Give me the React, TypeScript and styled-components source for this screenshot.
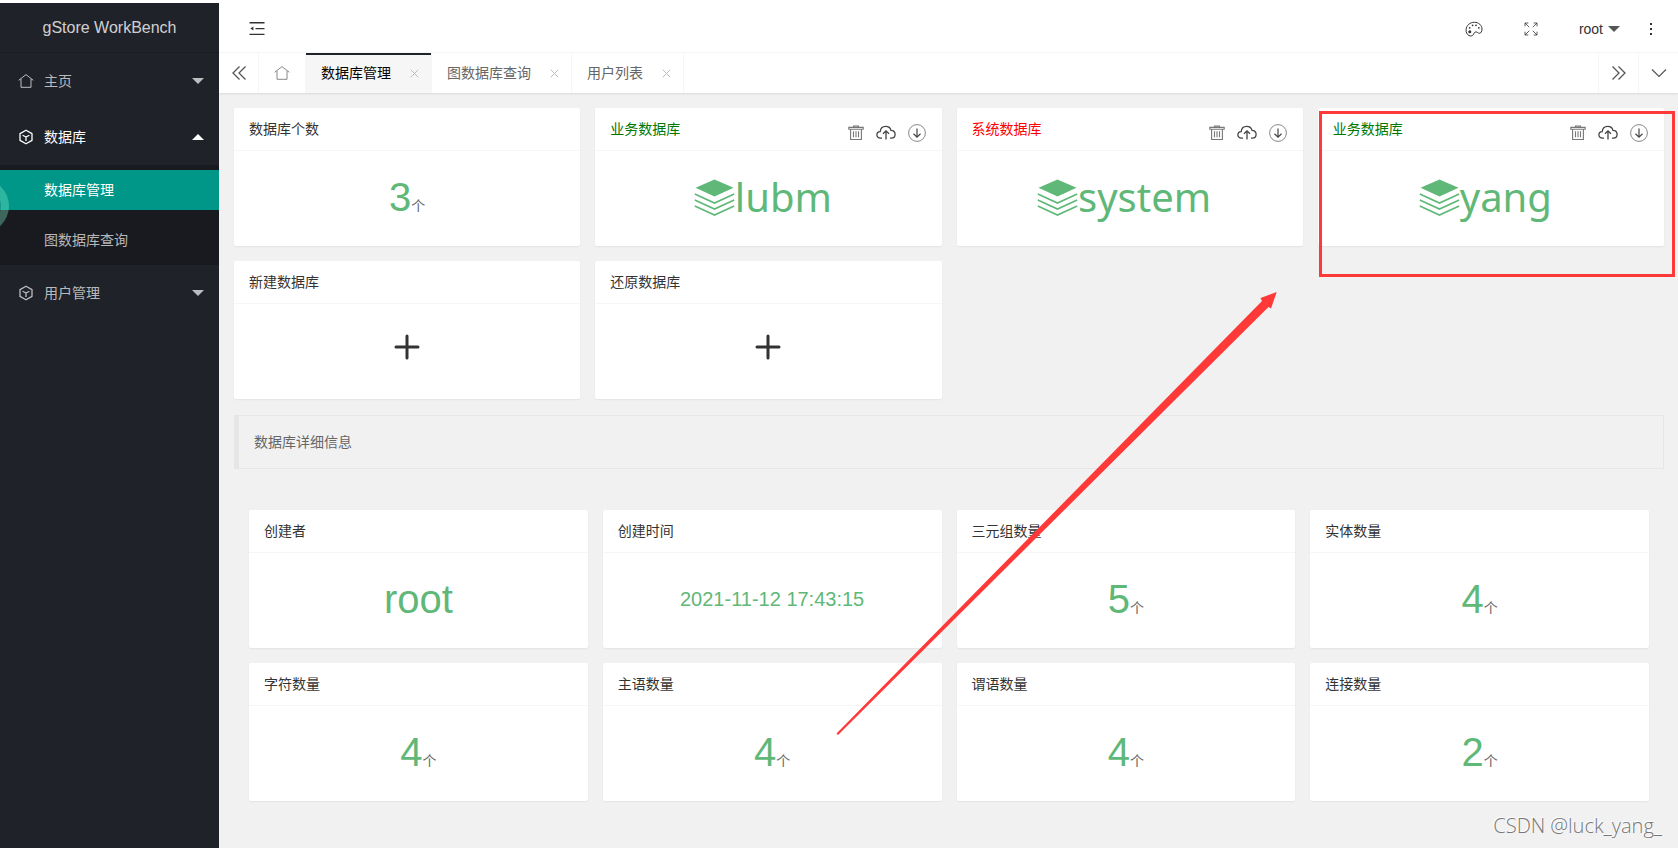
import React, { ReactNode } from 'react';
import styled, { createGlobalStyle } from 'styled-components';

const GlobalStyle = createGlobalStyle`
  * { box-sizing: border-box; }
  html, body { margin: 0; padding: 0; }
  body {
    background: #f1f1f1;
    color: #333;
    font: 14px/24px "Liberation Sans", "Noto Sans CJK SC", sans-serif;
  }
  button { font: inherit; color: inherit; background: none; border: 0; padding: 0; cursor: pointer; }
  a { color: inherit; text-decoration: none; }
  h1, h2, h3, p { margin: 0; padding: 0; font-weight: 400; }
  svg { display: block; flex: none; }
`;

const green = '#5fb878';

const Page = styled.div`
  position: relative;
  display: flex;
  min-height: 100vh;
  border-top: 3px solid #fff;
  overflow: hidden;
  &::before {
    content: "";
    position: absolute;
    top: -1px;
    left: 0;
    right: 0;
    height: 1px;
    background: #d9d9d9;
  }
`;

const Sidebar = styled.aside`
  position: relative;
  width: 219px;
  flex: none;
  background: #20222a;
  color: rgba(255, 255, 255, 0.7);
`;

const Logo = styled.h1`
  height: 50px;
  line-height: 50px;
  font-size: 16px;
  text-align: center;
  color: rgba(255, 255, 255, 0.8);
  border-bottom: 1px solid #1b1d23;
`;

const NavItem = styled.button<{ $active?: boolean }>`
  display: flex;
  align-items: center;
  gap: 10px;
  width: 100%;
  height: 56px;
  padding: 0 15px 0 18px;
  color: ${(p) => (p.$active ? '#fff' : 'rgba(255,255,255,0.7)')};
  span { flex: 1; text-align: left; }
`;

const Caret = styled.i<{ $up?: boolean; $color?: string }>`
  width: 0;
  height: 0;
  border: 6px solid transparent;
  border-top-color: ${(p) => (p.$up ? 'transparent' : p.$color || 'currentColor')};
  border-bottom-color: ${(p) => (p.$up ? p.$color || 'currentColor' : 'transparent')};
  margin-top: ${(p) => (p.$up ? '-6px' : '6px')};
`;

const SubMenu = styled.div`
  display: flex;
  flex-direction: column;
  gap: 10px;
  padding: 5px 0;
  background: #191a20;
`;

const SubLink = styled.a<{ $active?: boolean }>`
  height: 40px;
  line-height: 40px;
  padding-left: 44px;
  color: ${(p) => (p.$active ? '#fff' : 'rgba(255,255,255,0.7)')};
  background: ${(p) => (p.$active ? '#009688' : 'transparent')};
`;

const FloatingBall = styled.span`
  position: absolute;
  left: -45px;
  top: 176px;
  width: 54px;
  height: 54px;
  border-radius: 50%;
  border: 8px solid rgba(124, 237, 200, 0.36);
  background: rgba(70, 150, 150, 0.36) padding-box;
`;

const Main = styled.div`
  flex: 1;
  min-width: 0;
`;

const Header = styled.header`
  display: flex;
  align-items: center;
  justify-content: space-between;
  height: 50px;
  padding: 2px 25px 0 30px;
  background: #fff;
  border-bottom: 1px solid #f6f6f6;
`;

const HeaderTools = styled.div`
  display: flex;
  align-items: center;
`;

const ToolButton = styled.button<{ $gap?: number }>`
  display: flex;
  align-items: center;
  gap: 5px;
  margin-right: ${(p) => p.$gap || 0}px;
`;

const CloseButton = styled.button`
  color: #bbb;
`;

const TabBar = styled.nav`
  position: relative;
  display: flex;
  height: 40px;
  background: #fff;
  box-shadow: 0 1px 2px rgba(0, 0, 0, 0.1);
`;

const TabControl = styled.button<{ $wide?: boolean; $end?: boolean }>`
  display: flex;
  align-items: center;
  justify-content: center;
  width: ${(p) => (p.$wide ? 47 : 40)}px;
  color: ${(p) => (p.$wide ? '#888' : '#555')};
  border-style: solid;
  border-color: #f6f6f6;
  border-width: ${(p) => (p.$end ? '0 0 0 1px' : '0 1px 0 0')};
`;

const Spacer = styled.div`
  flex: 1;
`;

const Tab = styled.div<{ $active?: boolean }>`
  display: flex;
  align-items: center;
  gap: 19px;
  padding: 0 12px 0 15px;
  border-right: 1px solid #f6f6f6;
  color: ${(p) => (p.$active ? '#000' : '#666')};
  background: ${(p) => (p.$active ? '#f6f6f6' : '#fff')};
  box-shadow: ${(p) => (p.$active ? 'inset 0 2px 0 #20222a' : 'none')};
`;

const Content = styled.main`
  padding: 15px 14px 45px 15px;
`;

const CardGrid = styled.div<{ $inset?: boolean }>`
  display: grid;
  grid-template-columns: repeat(4, minmax(0, 1fr));
  gap: 15px;
  padding: ${(p) => (p.$inset ? '0 15px' : '0')};
`;

const Card = styled.section`
  background: #fff;
  border-radius: 2px;
  box-shadow: 0 1px 2px rgba(0, 0, 0, 0.06);
`;

const CardHead = styled.header<{ $color?: string }>`
  display: flex;
  justify-content: space-between;
  height: 43px;
  padding: 0 16px 0 15px;
  line-height: 42px;
  color: ${(p) => p.$color || '#333'};
  border-bottom: 1px solid #f6f6f6;
  h3 { font-size: 14px; }
`;

const CardActions = styled.div`
  display: flex;
  align-items: center;
  gap: 12px;
  padding-top: 8px;
  color: #444;
`;

const CardBody = styled.div`
  display: flex;
  align-items: center;
  justify-content: center;
  height: 95px;
  padding-bottom: 3px;
  color: #666;
`;

const AddButton = styled.button`
  padding-bottom: 6px;
`;

const Figure = styled.p<{ $small?: boolean }>`
  display: flex;
  align-items: baseline;
  line-height: 14px;
  strong {
    font-weight: 400;
    font-size: ${(p) => (p.$small ? 20 : 40)}px;
    line-height: 40px;
    color: ${green};
  }
`;

const DbName = styled.p`
  display: flex;
  align-items: center;
  padding-right: 11px;
  color: ${green};
  font: 40px/48px "Noto Sans", "Open Sans", sans-serif;
`;

const Quote = styled.h2`
  margin: 16px 0 41px;
  padding: 15px;
  border: 1px solid #e6e6e6;
  border-left-width: 5px;
  font-size: 14px;
  line-height: 22px;
  color: #666;
`;

const Highlight = styled.div`
  position: absolute;
  z-index: 2;
  top: 108px;
  right: 3px;
  width: 356px;
  height: 166px;
  border: 3px solid #ff3838;
  pointer-events: none;
`;

const Arrow = styled.svg`
  position: absolute;
  z-index: 2;
  top: 288px;
  right: 400px;
  pointer-events: none;
`;

const Watermark = styled.div`
  position: absolute;
  right: 16px;
  bottom: 9px;
  font: 20px/26px "Open Sans", "Noto Sans", sans-serif;
  font-weight: 300;
  color: #777;
  text-shadow: -1px -1px 0 #fff;
`;

type IconProps = { children: ReactNode; w?: number; h?: number; box?: string; sw?: number };
const Icon = ({ children, w = 16, h = 16, box = '0 0 16 16', sw = 1 }: IconProps) => (
  <svg width={w} height={h} viewBox={box} fill="none" stroke="currentColor" strokeWidth={sw} aria-hidden="true">
    {children}
  </svg>
);

const HomeIcon = () => (
  <Icon>
    <path d="M.7 7.3 8 1.6l7.3 5.7M3 6v8.3h10V6" strokeLinejoin="round" />
  </Icon>
);

const CubeIcon = () => (
  <Icon sw={1.3}>
    <path d="M8 1.2 14 4.6v6.8L8 14.8 2 11.4V4.6zM4.600 6.200 8 8l3.400-1.800M8 8v4" strokeLinejoin="round" />
  </Icon>
);

const FoldIcon = () => (
  <Icon>
    <path d="M.5 1.7h15M6.5 7.6h9M.5 13.4h15" strokeWidth="1.4" />
    <path d="M4.4 5.6v4L1.4 7.6z" fill="currentColor" stroke="none" />
  </Icon>
);

const PaletteIcon = () => (
  <Icon w={18} h={16} box="0 0 18 16">
    <path d="M4 14.6C1.8 13.3.8 11 1.1 8.4 1.6 4.2 5 1.3 9.3 1.3c4.4 0 7.7 3 7.7 6.7 0 2.3-1 4.3-2.6 4.3-1.4 0-2-1.5-3.5-1.4-1.8.1-1.8 1.7-2.7 2.9-1 1.3-2.7 1.5-4.2.8z" />
    <g fill="currentColor" stroke="none">
      <circle cx="4.8" cy="10.7" r="1.5" />
      <circle cx="4.7" cy="6.8" r=".9" />
      <circle cx="7.6" cy="4.3" r=".9" />
      <circle cx="11" cy="4.3" r=".9" />
      <circle cx="13.8" cy="6.8" r=".9" />
    </g>
  </Icon>
);

const ExpandIcon = () => (
  <Icon w={14} h={14} box="0 0 14 14" sw={0.8}>
    <path d="M1 4.3V1h3.3M1 1l4.2 4.2M9.7 1H13v3.3M13 1 8.8 5.2M1 9.7V13h3.3M1 13l4.2-4.2M9.7 13H13V9.7M13 13 8.8 8.8" />
  </Icon>
);

const MoreIcon = () => (
  <Icon w={4} h={14} box="0 0 4 14">
    <path d="M1 1h2v2H1zM1 6h2v2H1zM1 11h2v2H1z" fill="currentColor" stroke="none" />
  </Icon>
);

const DoubleChevron = ({ right }: { right?: boolean }) => (
  <Icon sw={1.3}>
    <path d={right ? 'M1.5 1.5 8 8l-6.5 6.5M7.5 1.5 14 8l-6.5 6.5' : 'M8.5 1.5 2 8l6.5 6.5M14.5 1.5 8 8l6.5 6.5'} />
  </Icon>
);

const ChevronDown = () => (
  <Icon sw={1.2}>
    <path d="m1 4.5 7 7 7-7" />
  </Icon>
);

const CloseIcon = () => (
  <Icon w={9} h={9} box="0 0 9 9">
    <path d="m.7.7 7.6 7.6M8.3.7.7 8.3" />
  </Icon>
);

const TrashIcon = () => (
  <Icon sw={1.1}>
    <g stroke="#777">
      <path d="M5.5 2.2V1h5v1.2M.8 2.4h14.4v1.8H.8zM2.6 4.4v10.1h10.8V4.4" />
      <path d="M5.5 6.3v5.9M8 6.3v5.9M10.5 6.3v5.9" />
    </g>
  </Icon>
);

const CloudIcon = () => (
  <Icon w={20} h={16} box="0 0 20 16" sw={1.3}>
    <path d="M6 13.2H4.5C2.5 13.2.9 11.8.9 10c0-1.9 1.5-3.2 3.3-3.3C4.4 3.5 6.7 1.3 9.7 1.3c2.7 0 4.7 1.5 5.3 4 2.4.1 4.1 1.8 4.1 4 0 2.3-1.6 3.9-3.9 3.9H14" />
    <path d="M10 14.5V6M7 8.8l3-3 3 3" />
  </Icon>
);

const DownloadIcon = () => (
  <Icon w={18} h={18} box="0 0 18 18">
    <circle cx="9" cy="9" r="8.4" stroke="#888" />
    <path d="M9 4.5v8.5M5.5 9.7 9 13.1l3.5-3.4" strokeWidth="1.2" />
  </Icon>
);

const LayersIcon = () => (
  <Icon w={41} h={37} box="0 0 41 37" sw={1.6}>
    <path d="M20.5.5 39.5 8.8 20.5 17.5 1.5 8.8z" fill="currentColor" stroke="none" />
    <path d="M.8 15 20.5 24 40.2 15M.8 21 20.5 30 40.2 21M.8 27 20.5 36 40.2 27" />
  </Icon>
);

const PlusIcon = () => (
  <Icon w={26} h={26} box="0 0 26 26" sw={3}>
    <path d="M13 2v22M2 13h22" stroke="#333" strokeLinecap="round" />
  </Icon>
);

const StatCard = ({ title, value, unit, small }: { title: string; value: string; unit?: string; small?: boolean }) => (
  <Card>
    <CardHead><h3>{title}</h3></CardHead>
    <CardBody>
      <Figure $small={small}><strong>{value}</strong>{unit}</Figure>
    </CardBody>
  </Card>
);

const DatabaseCard = ({ name, system }: { name: string; system?: boolean }) => (
  <Card>
    <CardHead $color={system ? 'red' : '#007800'}>
      <h3>{system ? '系统数据库' : '业务数据库'}</h3>
      <CardActions>
        <button aria-label="删除"><TrashIcon /></button>
        <button aria-label="备份"><CloudIcon /></button>
        <button aria-label="导出"><DownloadIcon /></button>
      </CardActions>
    </CardHead>
    <CardBody>
      <DbName><LayersIcon />{name}</DbName>
    </CardBody>
  </Card>
);

const ActionCard = ({ title }: { title: string }) => (
  <Card>
    <CardHead><h3>{title}</h3></CardHead>
    <CardBody>
      <AddButton aria-label={title}><PlusIcon /></AddButton>
    </CardBody>
  </Card>
);

const details = [
  { title: '创建者', value: 'root' },
  { title: '创建时间', value: '2021-11-12 17:43:15', small: true },
  { title: '三元组数量', value: '5', unit: '个' },
  { title: '实体数量', value: '4', unit: '个' },
  { title: '字符数量', value: '4', unit: '个' },
  { title: '主语数量', value: '4', unit: '个' },
  { title: '谓语数量', value: '4', unit: '个' },
  { title: '连接数量', value: '2', unit: '个' },
];

const tabs = ['数据库管理', '图数据库查询', '用户列表'];

export default function App() {
  return (
    <>
      <GlobalStyle />
      <Page>
        <Sidebar>
          <Logo>gStore WorkBench</Logo>
          <NavItem><HomeIcon /><span>主页</span><Caret /></NavItem>
          <NavItem $active><CubeIcon /><span>数据库</span><Caret $up /></NavItem>
          <SubMenu>
            <SubLink href="#manage" $active>数据库管理</SubLink>
            <SubLink href="#query">图数据库查询</SubLink>
          </SubMenu>
          <NavItem><CubeIcon /><span>用户管理</span><Caret /></NavItem>
          <FloatingBall />
        </Sidebar>
        <Main>
          <Header>
            <ToolButton aria-label="折叠菜单"><FoldIcon /></ToolButton>
            <HeaderTools>
              <ToolButton $gap={41} aria-label="主题"><PaletteIcon /></ToolButton>
              <ToolButton $gap={41} aria-label="全屏"><ExpandIcon /></ToolButton>
              <ToolButton $gap={29}>root<Caret $color="#555" /></ToolButton>
              <ToolButton aria-label="更多"><MoreIcon /></ToolButton>
            </HeaderTools>
          </Header>
          <TabBar>
            <TabControl aria-label="向左"><DoubleChevron /></TabControl>
            <TabControl $wide aria-label="首页"><HomeIcon /></TabControl>
            {tabs.map((label, i) => (
              <Tab key={label} $active={i === 0}>
                <a href="#tab">{label}</a>
                <CloseButton aria-label="关闭"><CloseIcon /></CloseButton>
              </Tab>
            ))}
            <Spacer />
            <TabControl $end aria-label="向右"><DoubleChevron right /></TabControl>
            <TabControl $end aria-label="标签菜单"><ChevronDown /></TabControl>
          </TabBar>
          <Content>
            <CardGrid>
              <StatCard title="数据库个数" value="3" unit="个" />
              <DatabaseCard name="lubm" />
              <DatabaseCard name="system" system />
              <DatabaseCard name="yang" />
              <ActionCard title="新建数据库" />
              <ActionCard title="还原数据库" />
            </CardGrid>
            <Quote>数据库详细信息</Quote>
            <CardGrid $inset>
              {details.map((d) => <StatCard key={d.title} {...d} />)}
            </CardGrid>
          </Content>
        </Main>
        <Highlight />
        <Arrow width="442" height="446" viewBox="0 0 442 446" aria-hidden="true">
          <path d="M.5 442.5 426 10l-1.500-3L440.700 1 435 17.500l-2.500-1.500L2 444z" fill="#ff3838" />
        </Arrow>
        <Watermark>CSDN @luck_yang_</Watermark>
      </Page>
    </>
  );
}
